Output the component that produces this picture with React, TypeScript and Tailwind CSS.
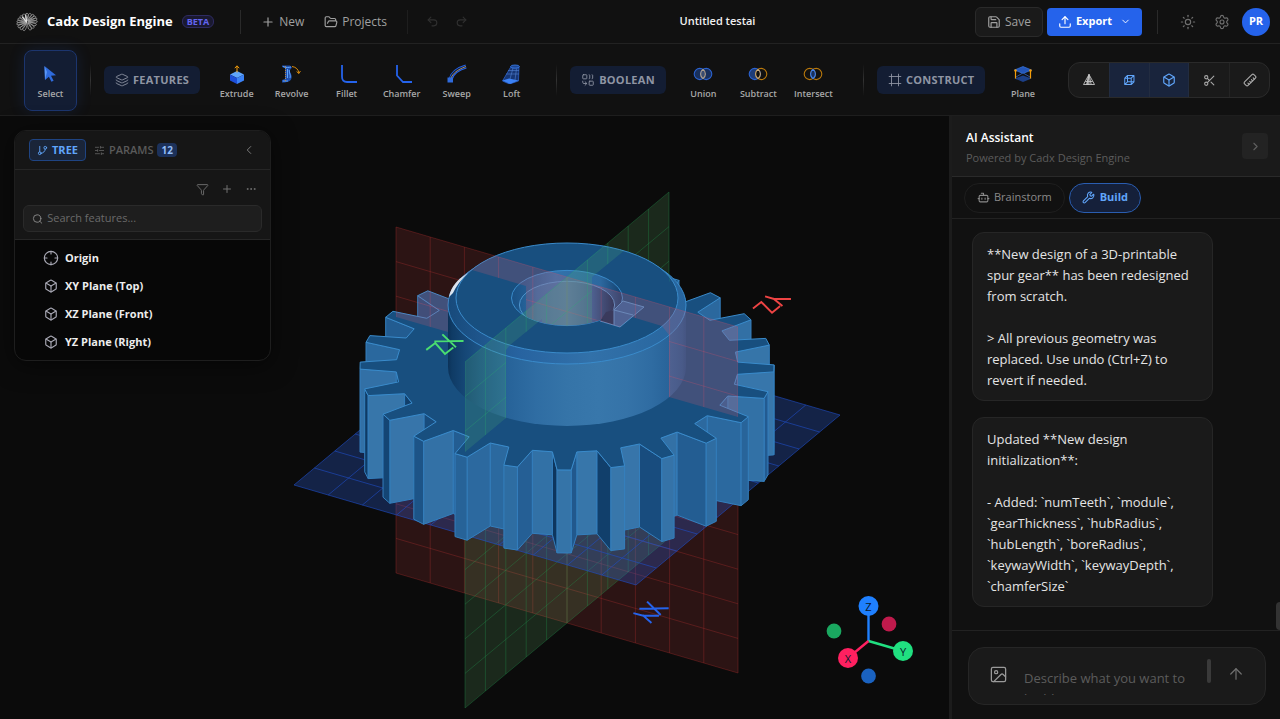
import React from "react";
import {
  ArrowUp,
  Bot,
  Box,
  ChevronDown,
  ChevronLeft,
  ChevronRight,
  Combine,
  Crosshair,
  Ellipsis,
  FolderOpen,
  Frame,
  Funnel,
  GitBranch,
  Image as ImageIcon,
  Layers,
  Plus,
  Redo2,
  Ruler,
  Save,
  Scissors,
  Search,
  Settings,
  SlidersHorizontal,
  Sun,
  Undo2,
  Upload,
  Wrench,
} from "lucide-react";

/* ---------- viewport geometry ---------- */

type Pt = [number, number];

const CX = 567;
const SQUASH = 0.4975;
const GEAR_TOP = 367;
const GEAR_BOTTOM = 450;
const HUB_TOP = 298;
const HUB_RIM = 305;
const TEETH = 24;

const rad = (deg: number) => (deg * Math.PI) / 180;

// point on a horizontal disc, 0deg faces the camera and + goes right
const onDisc = (r: number, deg: number, cy: number): Pt => [
  CX + r * Math.sin(rad(deg)),
  cy + r * Math.cos(rad(deg)) * SQUASH,
];

const toPoints = (pts: Pt[]) => pts.map((p) => p[0].toFixed(1) + "," + p[1].toFixed(1)).join(" ");

const SHADES: [number, number, number, number][] = [
  [-90, 12, 50, 88],
  [-68, 17, 63, 107],
  [-53, 24, 76, 125],
  [-38, 35, 93, 146],
  [-23, 43, 105, 159],
  [-8, 50, 113, 166],
  [12, 57, 120, 172],
  [36, 51, 113, 166],
  [51, 44, 105, 159],
  [66, 37, 95, 149],
  [90, 30, 84, 136],
];

const shade = (deg: number) => {
  for (let i = 1; i < SHADES.length; i++) {
    const a = SHADES[i - 1];
    const b = SHADES[i];
    if (deg <= b[0]) {
      const t = (deg - a[0]) / (b[0] - a[0]);
      const mix = (k: number) => Math.round(a[k] + (b[k] - a[k]) * t);
      return `rgb(${mix(1)},${mix(2)},${mix(3)})`;
    }
  }
  return "rgb(30,84,136)";
};

const norm = (deg: number) => ((((deg + 180) % 360) + 360) % 360) - 180;

const outline: { r: number; deg: number; normal: number }[] = [];
for (let i = 0; i < TEETH; i++) {
  const c = -30.8 + i * 15;
  outline.push({ r: 171, deg: c - 4.1, normal: c - 81.8 });
  outline.push({ r: 207, deg: c - 1.95, normal: c });
  outline.push({ r: 207, deg: c + 1.95, normal: c + 81.8 });
  outline.push({ r: 171, deg: c + 4.1, normal: c + 7.5 });
}

const gearTop = outline.map((v) => onDisc(v.r, v.deg, GEAR_TOP));

const walls = outline
  .map((v, i) => {
    const w = outline[(i + 1) % outline.length];
    return {
      pts: [
        onDisc(v.r, v.deg, GEAR_TOP),
        onDisc(w.r, w.deg, GEAR_TOP),
        onDisc(w.r, w.deg, GEAR_BOTTOM),
        onDisc(v.r, v.deg, GEAR_BOTTOM),
      ] as Pt[],
      normal: norm(v.normal),
      depth: v.r * Math.cos(rad(v.deg)) + w.r * Math.cos(rad(w.deg)),
    };
  })
  .filter((w) => Math.abs(w.normal) < 90)
  .sort((a, b) => a.depth - b.depth);

const AXIS_X: Pt = [-102, 85];
const AXIS_Y: Pt = [171, 50];
const AXIS_Z: Pt = [0, -173];

const at = (a: Pt, b: Pt, s: number, t: number): Pt => [
  CX + a[0] * s + b[0] * t,
  450 + a[1] * s + b[1] * t,
];

const STEPS = [-0.8, -0.6, -0.4, -0.2, 0, 0.2, 0.4, 0.6, 0.8];

type PlaneProps = { a: Pt; b: Pt; fill: string; opacity: number; line: string; lineOpacity: number };

const GridPlane = ({ a, b, fill, opacity, line, lineOpacity }: PlaneProps) => (
  <g>
    <polygon
      points={toPoints([at(a, b, -1, -1), at(a, b, 1, -1), at(a, b, 1, 1), at(a, b, -1, 1)])}
      fill={fill}
      fillOpacity={opacity}
      stroke={line}
      strokeOpacity={lineOpacity}
    />
    {STEPS.map((s) => (
      <g key={s} stroke={line} strokeOpacity={lineOpacity} fill="none">
        <polyline points={toPoints([at(a, b, s, -1), at(a, b, s, 1)])} />
        <polyline points={toPoints([at(a, b, -1, s), at(a, b, 1, s)])} />
      </g>
    ))}
  </g>
);

const HUB_STOPS = [-90, -75, -60, -45, -30, -15, 0, 15, 30, 45, 60, 75, 90];

const GearScene = () => (
  <svg
    className="absolute inset-0 h-full w-full"
    viewBox="0 116 949 603"
    preserveAspectRatio="xMidYMid meet"
    role="img"
    aria-label="Spur gear model"
  >
    <defs>
      <linearGradient id="hub" x1="448" x2="686" y1="0" y2="0" gradientUnits="userSpaceOnUse">
        {HUB_STOPS.map((d) => (
          <stop key={d} offset={(Math.sin(rad(d)) + 1) / 2} stopColor={shade(d)} />
        ))}
      </linearGradient>
      <linearGradient id="rim" x1="448" x2="686" y1="0" y2="0" gradientUnits="userSpaceOnUse">
        <stop offset="0" stopColor="#174a7b" />
        <stop offset="0.3" stopColor="#2763a0" />
        <stop offset="0.6" stopColor="#3271a9" />
        <stop offset="1" stopColor="#27659e" />
      </linearGradient>
      <linearGradient id="bore" x1="519" x2="615" y1="0" y2="0" gradientUnits="userSpaceOnUse">
        <stop offset="0" stopColor="#1f5a90" />
        <stop offset="0.2" stopColor="#3270a6" />
        <stop offset="0.5" stopColor="#4079ac" />
        <stop offset="0.75" stopColor="#2a659c" />
        <stop offset="1" stopColor="#0d3056" />
      </linearGradient>
      <linearGradient id="boreRim" x1="511" x2="623" y1="0" y2="0" gradientUnits="userSpaceOnUse">
        <stop offset="0" stopColor="#195084" />
        <stop offset="0.4" stopColor="#3272ab" />
        <stop offset="0.8" stopColor="#2c689f" />
        <stop offset="1" stopColor="#123f6c" />
      </linearGradient>
      <clipPath id="solid">
        <polygon points={toPoints(gearTop)} />
        {walls.map((w, i) => (
          <polygon key={i} points={toPoints(w.pts)} />
        ))}
        <ellipse cx={CX} cy={HUB_TOP} rx="111" ry="55" />
        <ellipse cx={CX} cy={HUB_RIM} rx="119" ry="59" />
        <rect x="448" y={HUB_RIM} width="238" height="62" />
      </clipPath>
      {/* parts of each upright plane that stand in front of the solid */}
      <clipPath id="redFront">
        <path d="M396 220H738V417L669 397V335L662 326L608 310V316.6A55.5 27.6 0 0 1 526 316.6V286L472 270V360L448 332L396 317Z" />
        <path d="M608 310L623 314V301L644 307L620 327L600 321L608 316Z" />
      </clipPath>
      <clipPath id="greenFront">
        <path d="M669 185V282L686 268L664 218L592 277V322.6A55.5 27.6 0 0 1 542 322.6V319L510 345L506 350V418L465 452V185Z" />
      </clipPath>
      <clipPath id="hubLeft">
        <path d="M0 0H949V719H0Z M448 305A119 59 0 0 1 472 270L472 380H448Z" clipRule="evenodd" />
      </clipPath>
      <clipPath id="boreHole">
        <ellipse cx={CX} cy={HUB_TOP} rx="55.5" ry="27.6" />
      </clipPath>
    </defs>

    <GridPlane a={AXIS_Y} b={AXIS_Z} fill="#b43c3c" opacity={0.2} line="#b03030" lineOpacity={0.34} />
    <GridPlane a={AXIS_X} b={AXIS_Z} fill="#6ec878" opacity={0.16} line="#229a50" lineOpacity={0.32} />
    <GridPlane a={AXIS_X} b={AXIS_Y} fill="#2b62e8" opacity={0.27} line="#1f4fc8" lineOpacity={0.6} />

    <g strokeWidth="1" strokeLinejoin="round">
      {walls.map((w, i) => (
        <polygon key={i} points={toPoints(w.pts)} fill={shade(w.normal)} stroke="#347fbd" />
      ))}
      <polygon points={toPoints(gearTop)} fill="#184f7f" stroke="#3a8bcb" />
    </g>

    {/* hub */}
    <path d="M448 305V367A119 59 0 0 0 686 367V305Z" fill="url(#hub)" />
    <ellipse cx={CX} cy={HUB_RIM} rx="119" ry="59" fill="url(#rim)" stroke="#3a8bcb" />
    <ellipse cx={CX} cy={HUB_TOP} rx="111" ry="55" fill="#184f7f" stroke="#3a8bcb" />
    <path d="M449 297C451 286 458 279 468 273C461 280 456 286 453 293Z" fill="#dbe6f0" />

    {/* bore and keyway */}
    <ellipse cx={CX} cy={HUB_TOP} rx="55.5" ry="27.6" fill="url(#boreRim)" stroke="#3a8bcb" />
    <g clipPath="url(#boreHole)">
      <ellipse cx={CX} cy={HUB_RIM} rx="47.6" ry="23.7" fill="url(#bore)" stroke="#4c93cb" />
    </g>
    <path d="M600 321L614 325V310L606 312Z" fill="#0f3358" />
    <path d="M623 301L644 307L620 327L614 325V310Z" fill="#2a659d" />
    <path d="M600 321L620 327L644 307L623 301L614 310V325M614 310L633 315" fill="none" stroke="#4c93cb" />

    <g clipPath="url(#solid)">
      <g clipPath="url(#redFront)">
        <g clipPath="url(#hubLeft)">
          <GridPlane a={AXIS_Y} b={AXIS_Z} fill="#e65a6e" opacity={0.2} line="#e0506a" lineOpacity={0.26} />
        </g>
      </g>
      <g clipPath="url(#greenFront)">
        <GridPlane a={AXIS_X} b={AXIS_Z} fill="#5abe6e" opacity={0.18} line="#2bb070" lineOpacity={0.3} />
      </g>
    </g>

    {/* plane labels */}
    <g fill="none" strokeWidth="1.9" strokeLinecap="square">
      <path
        stroke="#4ade70"
        d="M427 349.3L435.3 343L445 354L452.6 348M443 335L455.3 346.6M435.3 341.4L462.6 341"
      />
      <path
        stroke="#ef4444"
        d="M753.7 308L761.3 302L772 312.7L779.3 306.7M766 296.7L774 299L790 299M774 299L781.7 305.3"
      />
      <path
        stroke="#2563eb"
        d="M634.3 613.3L643.3 615.7H658M643.3 615.7L650.7 622.3M647.7 602.3L660 614.3M640.3 608.7L667.7 608.3"
      />
    </g>

    {/* orientation gizmo */}
    <g strokeWidth="2.4">
      <path d="M868.5 641V606" stroke="#1f80ff" />
      <path d="M868.5 641L903 651" stroke="#20e080" />
      <path d="M868.5 641L848 658" stroke="#ff2060" />
    </g>
    <circle cx="834" cy="631" r="7.4" fill="#1aa860" />
    <circle cx="889" cy="624" r="7.4" fill="#c01a4c" />
    <circle cx="868.5" cy="676" r="7.4" fill="#1a62c0" />
    <circle cx="868.5" cy="606" r="10" fill="#1f80ff" />
    <circle cx="848" cy="658" r="10" fill="#ff2060" />
    <circle cx="903" cy="651" r="10" fill="#20e080" />
    <g fontFamily="Open Sans, sans-serif" fontSize="11" textAnchor="middle" fill="#08182c">
      <text x="868.5" y="611">Z</text>
      <text x="848" y="663">X</text>
      <text x="903" y="656">Y</text>
    </g>
  </svg>
);

/* ---------- icons ---------- */

const LogoMark = () => (
  <svg width="22" height="22" viewBox="0 0 22 22" fill="none" stroke="#a0a0a0" strokeWidth="0.8" aria-hidden="true">
    <g transform="rotate(-18 11 11) translate(0 2) scale(1 0.82)">
      {[0, 20, 40, 58, 76, 96, 118, 140, 160, 200, 220, 242, 264, 282, 300, 320, 340].map((deg) => (
        <path key={deg} d="M11 9.6C10.6 6 11 3 12.6 0.8C14.6 0.6 15 2.6 14.2 4.4C13.4 6.4 12.4 8 11 9.6" transform={`rotate(${deg} 11 11)`} />
      ))}
      <path d="M12 2L10.5 12M8 3L10.5 11" stroke="#e0e0e0" strokeWidth="1.2" />
    </g>
  </svg>
);

const SelectIcon = () => (
  <svg width="20" height="20" viewBox="0 0 20 20" aria-hidden="true">
    <path d="M3.5 2L15 11.2L10 11.8L12.6 16.8L10.4 17.8L7.9 12.8L4 16Z" fill="#2f6bdc" />
    <path d="M3.5 2L4 16L6 8Z" fill="#5b97f5" />
  </svg>
);

const ExtrudeIcon = () => (
  <svg width="20" height="20" viewBox="0 0 20 20" aria-hidden="true">
    <path d="M10 7L17 10.5L10 14L3 10.5Z" fill="#60a5fa" />
    <path d="M3 10.5L10 14V20L3 16.5Z" fill="#1d4ed8" />
    <path d="M17 10.5L10 14V20L17 16.5Z" fill="#3b82f6" />
    <path d="M10 8.5V2M7.8 4.2L10 1.8L12.2 4.2" stroke="#f59e0b" fill="none" />
  </svg>
);

const RevolveIcon = () => (
  <svg width="20" height="20" viewBox="0 0 20 20" fill="none" aria-hidden="true">
    <path d="M0 1.5H8L10 3.5L8 6C7.5 8.5 10.5 11 9.5 14C9 17 6 18.5 0 18.5V16L3 15V4L0 3Z" fill="#1e4fb0" />
    <path d="M1 2.5C4 4 7 3.6 9 3M5.5 5V14M7.2 6C7 9 9 11 8 14M1 17H6" stroke="#60a5fa" />
    <path d="M3.5 2V17" stroke="#b88a4a" strokeDasharray="1 1" />
    <path d="M10 2.5C14 3 16.5 5.5 16.8 9M14.6 7.5L16.9 9.6L18.4 7" stroke="#d98a0b" />
  </svg>
);

const FilletIcon = () => (
  <svg width="20" height="20" viewBox="0 0 20 20" fill="none" stroke="#2563eb" strokeWidth="1.8" aria-hidden="true">
    <path d="M5 1V12.5C5 16 7 18 10 18H20" />
  </svg>
);

const ChamferIcon = () => (
  <svg width="20" height="20" viewBox="0 0 20 20" fill="none" stroke="#2563eb" strokeWidth="1.8" aria-hidden="true">
    <path d="M5 1V11.5L11 18H20" />
  </svg>
);

const SweepIcon = () => (
  <svg width="20" height="20" viewBox="0 0 20 20" fill="none" aria-hidden="true">
    <path d="M3.5 15.5C5 9.5 10 5 19 2.5" stroke="#2563eb" strokeWidth="4" />
    <path d="M3.5 14.5C5 9.5 10 5 19 2.5" stroke="#0f1f40" strokeWidth="2.2" />
    <path d="M4 14C6 9.5 10 5.8 19 2.5" stroke="#c8a878" strokeWidth="0.8" />
    <path d="M0.5 13.5H6V18.5H0.5Z" fill="#2f6bdc" />
  </svg>
);

const LoftIcon = () => (
  <svg width="20" height="20" viewBox="0 0 20 20" fill="none" aria-hidden="true">
    <path d="M9 2.5L17 2.5L16.5 17L7.5 20L0.5 17Z" fill="#173674" stroke="#2b5fc8" strokeWidth="0.8" />
    <ellipse cx="13" cy="2.6" rx="4.4" ry="1.6" fill="#1d4690" stroke="#3b82f6" strokeWidth="0.8" />
    <path d="M0.5 16.5L7 14.5L16.5 16.5L8 20Z" fill="#3b82f6" />
    <path d="M4 10H17M6 6.5H17M11 4L8 15M14.5 4.5L13 16" stroke="#4f7fd0" strokeWidth="0.6" />
  </svg>
);

type RingProps = { left: string; right: string; leftFill: string; rightFill: string; lens: string; lensFill: string };

const RingsIcon = ({ left, right, leftFill, rightFill, lens, lensFill }: RingProps) => (
  <svg width="20" height="20" viewBox="0 0 20 20" fill="none" strokeWidth="1.1" aria-hidden="true">
    <circle cx="6.8" cy="10" r="5.6" fill={leftFill} stroke={left} />
    <circle cx="13.2" cy="10" r="5.6" fill={rightFill} stroke={right} />
    <path d="M10 5.4A5.6 5.6 0 0 1 10 14.6A5.6 5.6 0 0 1 10 5.4Z" fill={lensFill} stroke={lens} />
  </svg>
);

const PlaneIcon = () => (
  <svg width="20" height="20" viewBox="0 0 20 20" fill="none" aria-hidden="true">
    <path d="M10 11.5L18.5 14.5L10 18L1.5 14.5Z" fill="#1c3f86" />
    <path d="M10 2.5L18.5 6L10 9.5L1.5 6Z" fill="#2456b8" stroke="#3b82f6" strokeWidth="0.6" />
    <path d="M2.5 6.5V14.5M17.5 6.5V14.5" stroke="#f59e0b" strokeWidth="1.2" />
    <path d="M3 13L9 9.5M17 13L11 9.5" stroke="#3b6fd8" strokeWidth="0.7" />
    <circle cx="2.5" cy="6.5" r="1.2" fill="#f59e0b" />
    <circle cx="17.5" cy="6.5" r="1.2" fill="#f59e0b" />
  </svg>
);

const PyramidIcon = () => (
  <svg width="14" height="14" viewBox="0 0 14 14" fill="none" stroke="#c4c4c4" strokeWidth="0.9" strokeLinejoin="round" aria-hidden="true">
    <path d="M7 1.5L12.5 11.5H1.5Z" />
    <path d="M7 1.5L4.8 11.5M7 1.5L9.2 11.5M3.4 8.5H10.6" />
    <path d="M7 1.5L4.8 11.5H7Z" fill="#c4c4c4" fillOpacity="0.5" />
  </svg>
);

const WireCubeIcon = () => (
  <svg width="12" height="12" viewBox="0 0 13 13" fill="none" stroke="#60a5fa" strokeWidth="1.1" strokeLinejoin="round" aria-hidden="true">
    <path d="M0.8 4.5H7.8V11.5H0.8ZM3.8 1.5H10.8V8.5H3.8ZM0.8 4.5L3.8 1.5M7.8 4.5L10.8 1.5M7.8 11.5L10.8 8.5M0.8 11.5L3.8 8.5" />
  </svg>
);

/* ---------- toolbar ---------- */

const featureTools = [
  { label: "Extrude", icon: <ExtrudeIcon /> },
  { label: "Revolve", icon: <RevolveIcon /> },
  { label: "Fillet", icon: <FilletIcon /> },
  { label: "Chamfer", icon: <ChamferIcon /> },
  { label: "Sweep", icon: <SweepIcon /> },
  { label: "Loft", icon: <LoftIcon /> },
];

const booleanTools = [
  {
    label: "Union",
    icon: <RingsIcon left="#2b62d0" right="#2b62d0" leftFill="#19305c" rightFill="#19305c" lens="#b0a08a" lensFill="#3a4c70" />,
  },
  {
    label: "Subtract",
    icon: <RingsIcon left="#2b62d0" right="#b8780c" leftFill="#1d3c78" rightFill="none" lens="#c8a878" lensFill="#111111" />,
  },
  {
    label: "Intersect",
    icon: <RingsIcon left="#b8780c" right="#b8780c" leftFill="none" rightFill="none" lens="#3b82f6" lensFill="#19305c" />,
  },
];

const ToolButton = ({ label, icon }: { label: string; icon: React.ReactNode }) => (
  <button
    type="button"
    className="flex w-[55px] flex-col items-center gap-1 pt-1 text-[9px] leading-3 font-semibold text-[#a8a8a8]"
  >
    {icon}
    {label}
  </button>
);

const GroupButton = ({ label, icon }: { label: string; icon: React.ReactNode }) => (
  <button
    type="button"
    className="flex h-7 items-center gap-1 rounded-md bg-[#131d33] px-[11px] text-[11px] font-bold tracking-wide text-[#8f95a3]"
  >
    {icon}
    {label}
  </button>
);

const Divider = ({ className = "" }: { className?: string }) => (
  <div className={"w-px bg-gradient-to-b from-transparent via-[#333333] to-transparent " + className} />
);

const treeItems = ["Origin", "XY Plane (Top)", "XZ Plane (Front)", "YZ Plane (Right)"];

const messages = [
  `**New design of a 3D-printable spur gear** has been redesigned from scratch.

> All previous geometry was replaced. Use undo (Ctrl+Z) to revert if needed.`,
  `Updated **New design initialization**:

- Added: \`numTeeth\`, \`module\`, \`gearThickness\`, \`hubRadius\`, \`hubLength\`, \`boreRadius\`, \`keywayWidth\`, \`keywayDepth\`, \`chamferSize\``,
];

const Header = () => (
  <header className="flex h-11 shrink-0 items-center border-b border-[#222222] bg-[#111111] pr-[10px] pl-4">
    <div className="flex items-center">
      <LogoMark />
      <h1 className="ml-[9px] text-[13px] font-bold text-white">Cadx Design Engine</h1>
      <span className="ml-[9px] rounded-md border border-[#2e2b62] bg-[#1a1930] px-1 text-[9px] leading-[11px] font-bold text-[#6366f1]">
        BETA
      </span>
      <div className="ml-[26px] h-6 w-px bg-[#2a2a2a]" />
      <button type="button" className="ml-5 flex items-center gap-1 text-xs text-[#a0a0a0]">
        <Plus size={14} />
        New
      </button>
      <button type="button" className="ml-5 flex items-center gap-1 text-xs text-[#a0a0a0]">
        <FolderOpen size={14} />
        Projects
      </button>
      <div className="ml-5 h-6 w-px bg-[#1e1e1e]" />
      <button type="button" aria-label="Undo" className="ml-[18px] text-[#303030]">
        <Undo2 size={13} />
      </button>
      <button type="button" aria-label="Redo" className="ml-4 text-[#303030]">
        <Redo2 size={13} />
      </button>
    </div>
    <div className="flex-1 pr-2 text-center text-[11px] font-semibold text-[#f0f0f0]">Untitled testai</div>
    <div className="flex items-center justify-end">
      <button type="button" className="flex h-[30px] items-center gap-1 rounded-md border border-[#2a2a2a] bg-[#1a1a1a] px-[11px] text-xs text-[#a0a0a0]">
        <Save size={14} />
        Save
      </button>
      <button type="button" className="ml-1 flex h-7 items-center gap-1 rounded bg-[#2563eb] px-[11px] text-[11px] font-bold text-white">
        <Upload size={14} />
        Export
        <ChevronDown size={11} className="ml-1" />
      </button>
      <div className="ml-[15px] h-6 w-px bg-[#2a2a2a]" />
      <button type="button" aria-label="Theme" className="ml-[22px] text-[#707070]">
        <Sun size={16} strokeWidth={1.7} />
      </button>
      <button type="button" aria-label="Settings" className="ml-[18px] text-[#707070]">
        <Settings size={16} strokeWidth={1.7} />
      </button>
      <button type="button" className="ml-3 h-7 w-7 rounded-full bg-[#2563eb] text-[11px] font-bold text-white">
        PR
      </button>
    </div>
  </header>
);

const Toolbar = () => (
  <nav className="flex h-[72px] shrink-0 items-center border-b border-[#1e1e1e] bg-[#111111] pt-px pr-[10px] pl-6">
    <button
      type="button"
      className="flex h-[61px] w-[53px] flex-col items-center justify-center gap-1 rounded-lg border border-[#1c356e] bg-[#131d33] pt-1 text-[9px] leading-3 font-semibold text-[#a8a8a8] shadow-[0_0_16px_rgba(37,99,235,0.15)]"
    >
      <SelectIcon />
      Select
    </button>
    <Divider className="mx-[13px] h-8" />
    <GroupButton label="FEATURES" icon={<Layers size={14} strokeWidth={1.5} />} />
    <div className="ml-[9px] flex">
      {featureTools.map((t) => (
        <ToolButton key={t.label} {...t} />
      ))}
    </div>
    <Divider className="mr-[13px] ml-[17px] h-8" />
    <GroupButton label="BOOLEAN" icon={<Combine size={14} strokeWidth={1.5} />} />
    <div className="ml-[10px] flex">
      {booleanTools.map((t) => (
        <ToolButton key={t.label} {...t} />
      ))}
    </div>
    <Divider className="mr-[13px] ml-[22px] h-8" />
    <GroupButton label="CONSTRUCT" icon={<Frame size={14} strokeWidth={1.5} />} />
    <div className="ml-[10px] flex">
      <ToolButton label="Plane" icon={<PlaneIcon />} />
    </div>
    <div className="ml-auto flex h-9 overflow-hidden rounded-xl border border-[#2a2a2a] bg-[#1a1a1a] text-[#a8a8a8]">
      <button type="button" aria-label="Shaded" className="flex w-10 items-center justify-center">
        <PyramidIcon />
      </button>
      <button type="button" aria-label="Wireframe" className="flex w-10 items-center justify-center border-l border-[#222c40] bg-[#19243c]">
        <WireCubeIcon />
      </button>
      <button type="button" aria-label="Solid" className="flex w-10 items-center justify-center border-x border-[#222c40] bg-[#19243c] text-[#60a5fa]">
        <Box size={14} />
      </button>
      <button type="button" aria-label="Section" className="flex w-10 items-center justify-center">
        <Scissors size={13} />
      </button>
      <button type="button" aria-label="Measure" className="flex w-10 items-center justify-center border-l border-[#242424]">
        <Ruler size={14} className="rotate-90" />
      </button>
    </div>
  </nav>
);

const TreePanel = () => (
  <aside className="absolute top-[14px] left-[14px] w-[257px] overflow-hidden rounded-xl border border-[#1e1e1e] bg-[#070707] shadow-[0_4px_24px_rgba(0,0,0,0.5)]">
    <div className="flex h-[39px] items-center border-b border-[#262626] bg-[#161616] px-[14px]">
      <button
        type="button"
        className="flex h-[22px] items-center gap-1 rounded border border-[#1f4482] bg-[#1a2539] px-[7px] text-[11px] font-bold text-[#60a5fa]"
      >
        <GitBranch size={11} />
        TREE
      </button>
      <button type="button" className="ml-2 flex items-center gap-1 text-[11px] font-semibold text-[#5a5a5a]">
        <SlidersHorizontal size={11} />
        PARAMS
        <span className="rounded-sm bg-[#1c315a] px-1 text-[10px] leading-[14px] font-bold text-[#93bdf8]">12</span>
      </button>
      <button type="button" aria-label="Collapse panel" className="ml-auto text-[#808080]">
        <ChevronLeft size={14} strokeWidth={1.6} />
      </button>
    </div>
    <div className="border-b border-[#262626] bg-[#161616] px-2 pt-[11px] pb-[7px]">
      <div className="flex h-4 items-center justify-end gap-3 pr-[5px] text-[#707070]">
        <button type="button" aria-label="Filter">
          <Funnel size={13} strokeWidth={1.7} />
        </button>
        <button type="button" aria-label="Add">
          <Plus size={12} />
        </button>
        <button type="button" aria-label="More">
          <Ellipsis size={12} />
        </button>
      </div>
      <label className="mt-2 flex h-[27px] items-center gap-1 rounded-md border border-[#2a2a2a] bg-[#1e1e1e] px-2 text-[#8a8a8a]">
        <Search size={12} />
        <input
          type="text"
          aria-label="Search features"
          placeholder="Search features..."
          className="w-full min-w-0 bg-transparent text-[11px] text-white outline-none placeholder:text-[#6a6a6a]"
        />
      </label>
    </div>
    <ul className="py-1">
      {treeItems.map((name, i) => (
        <li key={name} className="flex h-7 items-center gap-[6px] pl-7 text-[11px] font-bold text-[#ededed]">
          <span className="flex w-4 justify-center text-[#a8a8b4]">
            {i === 0 ? <Crosshair size={16} strokeWidth={1.7} /> : <Box size={14} />}
          </span>
          {name}
        </li>
      ))}
    </ul>
  </aside>
);

const Assistant = () => (
  <aside className="flex w-[331px] shrink-0 flex-col border-l-[3px] border-[#1c1c1c] bg-[#111111]">
    <div className="flex h-[61px] shrink-0 items-center justify-between border-b border-[#2a2a2a] bg-[#1a1a1a] pr-3 pl-[14px]">
      <div className="pt-1">
        <h2 className="text-xs leading-5 font-semibold text-white">AI Assistant</h2>
        <p className="text-[11px] leading-5 text-[#5c5c5c]">Powered by Cadx Design Engine</p>
      </div>
      <button type="button" aria-label="Collapse assistant" className="flex h-[26px] w-[26px] items-center justify-center rounded bg-[#232323] text-[#606060]">
        <ChevronRight size={13} />
      </button>
    </div>
    <div className="flex h-[42px] shrink-0 items-center gap-1 border-b border-[#222222] px-3">
      <button type="button" className="flex h-[30px] items-center gap-1 rounded-full border border-[#1e1e1e] px-3 text-[11px] text-[#8a8a8a]">
        <Bot size={13} />
        Brainstorm
      </button>
      <button type="button" className="flex h-[30px] items-center gap-[5px] rounded-full border border-[#2a5db0] bg-[#15203a] px-3 text-[11px] font-bold text-[#60a5fa]">
        <Wrench size={13} />
        Build
      </button>
    </div>
    <div className="relative flex min-h-0 flex-1 flex-col gap-4 overflow-hidden pt-[13px] pl-5">
      {messages.map((text) => (
        <p
          key={text}
          className="w-[241px] rounded-xl border border-[#262626] bg-[#1a1a1a] px-[14px] pt-[11px] pb-[9px] text-[13px] leading-[21px] whitespace-pre-wrap text-[#e4e4e4]"
        >
          {text}
        </p>
      ))}
      <div className="absolute right-0 bottom-0 h-7 w-1 rounded-l bg-[#333333]" />
    </div>
    <div className="shrink-0 border-t border-[#222222] pt-4 pr-[14px] pb-[14px] pl-4">
      <div className="flex h-[58px] items-center rounded-2xl border border-[#262626] bg-[#1a1a1a] px-5">
        <button type="button" aria-label="Attach image" className="mb-1 text-[#9a9a9a]">
          <ImageIcon size={19} strokeWidth={1.6} />
        </button>
        <div className="relative ml-4 flex-1">
          <textarea
            aria-label="Message"
            placeholder="Describe what you want to build..."
            className="block h-[38px] w-full resize-none overflow-hidden bg-transparent pt-[11px] pr-4 text-[13px] leading-[21px] text-white outline-none placeholder:text-[#5c5c5c]"
          />
          <div className="absolute top-[2px] right-0 h-6 w-1 rounded bg-[#3a3a3a]" />
        </div>
        <button type="button" aria-label="Send" className="mb-1 ml-4 text-[#707070]">
          <ArrowUp size={18} strokeWidth={1.6} />
        </button>
      </div>
    </div>
  </aside>
);

const App = () => {
  return (
    <div className="flex h-screen flex-col overflow-hidden bg-[#0b0b0b] font-['Open_Sans','Noto_Sans',sans-serif]">
      <Header />
      <Toolbar />
      <div className="flex min-h-0 flex-1">
        <main className="relative min-w-0 flex-1 bg-[#0b0b0b]">
          <GearScene />
          <TreePanel />
        </main>
        <Assistant />
      </div>
    </div>
  );
};

export default App;
